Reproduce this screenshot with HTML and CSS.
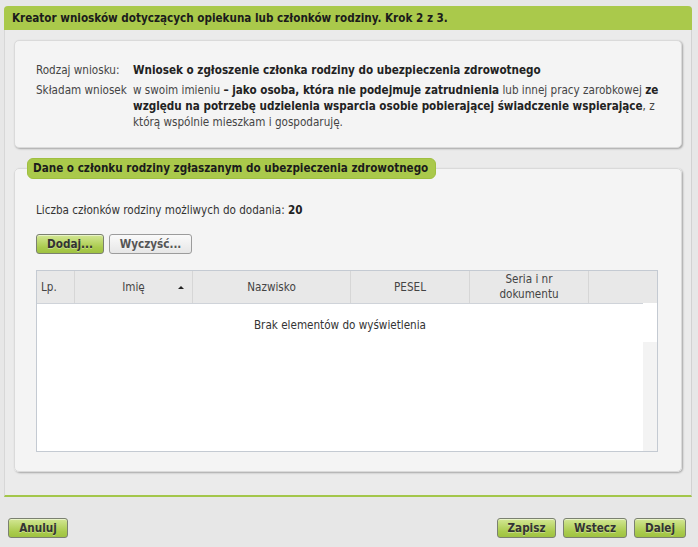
FILE: index.html
```html
<!DOCTYPE html>
<html lang="pl">
<head>
<meta charset="utf-8">
<title>Kreator wniosków</title>
<link rel="stylesheet" href="styles.css">
</head>
<body>
<div class="frame">
  <div class="frame-header">Kreator wniosków dotyczących opiekuna lub członków rodziny. Krok 2 z 3.</div>
  <div class="panel summary">
    <div class="row">
      <div class="label">Rodzaj wniosku:</div>
      <div class="value strong">Wniosek o zgłoszenie członka rodziny do ubezpieczenia zdrowotnego</div>
    </div>
    <div class="row">
      <div class="label">Składam wniosek</div>
      <div class="value"><span>w swoim imieniu</span> <b>– jako osoba, która nie podejmuje zatrudnienia</b> <span>lub innej pracy zarobkowej</span> <b>ze</b> <b>względu na potrzebę udzielenia wsparcia osobie pobierającej świadczenie wspierające</b><span>, z</span> <span>którą wspólnie mieszkam i gospodaruję.</span></div>
    </div>
  </div>
  <fieldset class="panel members">
    <legend class="legend">Dane o członku rodziny zgłaszanym do ubezpieczenia zdrowotnego</legend>
    <div class="count">Liczba członków rodziny możliwych do dodania: <b>20</b></div>
    <div class="actions">
      <button class="btn btn-green">Dodaj...</button>
      <button class="btn btn-gray">Wyczyść...</button>
    </div>
    <div class="grid">
      <div class="grid-head">
        <div class="th th-lp">Lp.</div>
        <div class="th th-imie">Imię<span class="sort"></span></div>
        <div class="th th-nazwisko">Nazwisko</div>
        <div class="th th-pesel">PESEL</div>
        <div class="th th-seria">Seria i nr<br>dokumentu</div>
        <div class="th th-empty"></div>
      </div>
      <div class="grid-body">
        <div class="grid-main">
          <div class="empty-msg">Brak elementów do wyświetlenia</div>
        </div>
        <div class="grid-scroll">
          <div class="scroll-top"></div>
          <div class="scroll-track"></div>
        </div>
      </div>
    </div>
  </fieldset>
</div>
<div class="footer">
  <button class="btn btn-green btn-anuluj">Anuluj</button>
  <div class="footer-right">
    <button class="btn btn-green btn-zapisz">Zapisz</button>
    <button class="btn btn-green btn-wstecz">Wstecz</button>
    <button class="btn btn-green btn-dalej">Dalej</button>
  </div>
</div>
</body>
</html>
```
FILE: styles.css
```css
* { box-sizing: border-box; }
html, body { margin: 0; padding: 0; }
body {
  background: #e7e7e7;
  font-family: "DejaVu Sans Condensed", "DejaVu Sans", sans-serif;
  font-size: 11.6px;
  color: #333;
  width: 698px;
  height: 547px;
  overflow: hidden;
}
.frame {
  margin: 6px 4px 0 4px;
  width: 688px;
  background: #ebebeb;
  border-left: 1px solid #d7d7d7;
  border-right: 1px solid #d2d2d2;
  border-bottom: 2px solid #a3c64a;
  border-radius: 4px 4px 0 0;
  padding-bottom: 23px;
}
.frame-header {
  background: #aac94b;
  height: 24px;
  line-height: 24px;
  padding-left: 8px;
  font-weight: bold;
  color: #1b1b1b;
  border-radius: 4px 4px 0 0;
  margin: 0 -1px;
}
.panel {
  background: #f4f4f4;
  border: 1px solid #dadada;
  border-radius: 5px;
  box-shadow: 1px 1px 2px rgba(0,0,0,0.3);
  margin: 10px 9px 0 9px;
}
.summary {
  padding: 21px 14px 17px 21px;
  display: flex;
  flex-direction: column;
  gap: 4px;
}
.row {
  display: flex;
  line-height: 16px;
}
.label {
  width: 97px;
  flex: none;
  color: #444;
}
.value { color: #444; }
.value b, .value.strong { color: #222; font-weight: bold; }
.members {
  margin-top: 10px;
  padding: 0 23px 19px 21px;
  min-width: 0;
}
.legend {
  background: #aac94b;
  border: 1px solid #9fbf40;
  border-radius: 6px;
  font-weight: bold;
  color: #1b1b1b;
  height: 21px;
  line-height: 19px;
  padding: 0 7px 0 5px;
  margin-left: -9px;
}
.count {
  margin-top: 23px;
  line-height: 16px;
  color: #333;
}
.count b { color: #222; }
.actions {
  margin-top: 16px;
  display: flex;
  gap: 5px;
}
.btn {
  font-family: inherit;
  font-size: 11.6px;
  font-weight: bold;
  color: #333;
  height: 20px;
  padding: 0;
  border-radius: 3px;
  cursor: pointer;
  text-shadow: 0 1px 0 rgba(255,255,255,0.35);
}
.btn-green {
  background: linear-gradient(#d3e794, #aacb4d 70%, #9fc241);
  border: 1px solid #7b8170;
  box-shadow: inset 0 1px 0 rgba(255,255,255,0.5);
}
.btn-gray {
  background: linear-gradient(#fafafa, #e6e6e6);
  border: 1px solid #9c9c9c;
  color: #555;
}
.actions .btn-green { width: 68px; }
.actions .btn-gray { width: 83px; }
.grid {
  margin-top: 16px;
  border: 1px solid #c4cad2;
  width: 622px;
  background: #fff;
}
.grid-head {
  display: flex;
  height: 32px;
  background: #e8e8e8;
}
.th {
  display: flex;
  align-items: center;
  justify-content: center;
  text-align: center;
  color: #444;
  line-height: 15px;
  border-right: 1px solid #d6d6d6;
  position: relative;
}
.th-lp { width: 38px; justify-content: flex-start; padding-left: 4px; }
.th-imie { width: 118px; }
.th-nazwisko { width: 158px; }
.th-pesel { width: 119px; }
.th-seria { width: 119px; }
.th-empty { flex: 1; border-right: none; }
.sort {
  position: absolute;
  right: 8px;
  top: 15px;
  width: 0; height: 0;
  border-left: 3px solid transparent;
  border-right: 3px solid transparent;
  border-bottom: 3px solid #222;
}
.grid-body {
  display: flex;
  height: 148px;
}
.grid-main {
  flex: 1;
  border-top: 1px solid #cfd3d9;
}
.empty-msg {
  text-align: center;
  line-height: 16px;
  padding-top: 13px;
  color: #333;
}
.grid-scroll {
  width: 14px;
  display: flex;
  flex-direction: column;
}
.scroll-top { height: 39px; background: #fff; }
.scroll-track { flex: 1; background: #f3f3f3; }
.footer {
  display: flex;
  justify-content: space-between;
  padding: 21px 12px 0 8px;
}
.footer-right { display: flex; gap: 7px; }
.btn-anuluj { width: 60px; }
.btn-zapisz { width: 59px; }
.btn-wstecz { width: 64px; }
.btn-dalej { width: 52px; }
```
